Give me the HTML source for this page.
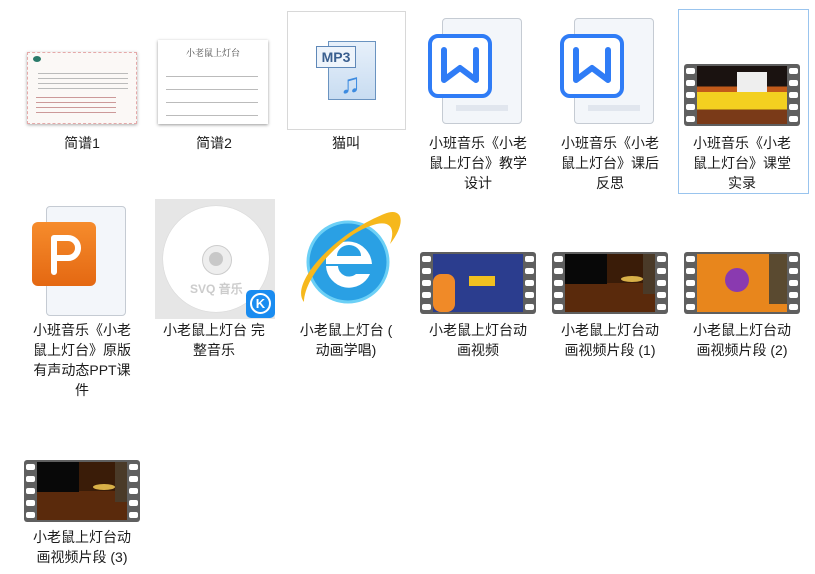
<!DOCTYPE html>
<html><head><meta charset="utf-8"><style>
body{margin:0;width:815px;height:574px;background:#fff;position:relative;overflow:hidden;font-family:"Liberation Sans","Noto Sans CJK SC",sans-serif}
.a{position:absolute}
.t{position:absolute;width:108px;text-align:center;font-size:14px;line-height:20px;color:#1b1b1b}
.film{position:absolute;width:116px;height:62px;background:#5f5f5f;border-radius:3px}
.film .h{position:absolute;width:9px;height:6px;background:#fff;border-radius:2px}
.film .in{position:absolute;left:13px;right:13px;top:2px;bottom:2px;overflow:hidden}
.doc{position:absolute;background:#f3f6fa;border:1.5px solid #c5cbd3;border-radius:4px}
</style></head><body>

<div class="a" style="left:27px;top:52px;width:110px;height:72px;background:#fbf8f6;box-shadow:0 1px 3px #aaa;border:1px dashed #e5a9a9;box-sizing:border-box">
<div class="a" style="left:5px;top:3px;width:8px;height:6px;background:#2a7a6a;border-radius:50%"></div>
<div class="a" style="left:10px;top:16px;width:90px;height:20px;background:repeating-linear-gradient(#fbf8f6 0 4px,#bbb 4px 5px)"></div>
<div class="a" style="left:8px;top:40px;width:80px;height:24px;background:repeating-linear-gradient(#fbf8f6 0 4px,#c99 4px 5px)"></div>
</div>
<div class="t" style="left:28px;top:133px">简谱1</div>

<div class="a" style="left:158px;top:40px;width:110px;height:84px;background:#fff;box-shadow:0 1px 3px #999">
<div class="a" style="left:25px;top:6px;width:60px;font-size:9px;color:#444;text-align:center;font-family:'Noto Serif CJK SC',serif">小老鼠上灯台</div>
<div class="a" style="left:8px;top:26px;width:92px;height:50px;background:repeating-linear-gradient(#fff 0 10px,#bbb 10px 11px,#fff 11px 13px)"></div>
</div>
<div class="t" style="left:160px;top:133px">简谱2</div>

<div class="a" style="left:287px;top:11px;width:119px;height:119px;border:1px solid #d8d8d8;box-sizing:border-box"></div>
<div class="a" style="left:328px;top:41px;width:48px;height:59px;background:linear-gradient(#e7f0fa,#c8dcf1);border:1px solid #6a93c0;box-sizing:border-box"></div>
<div class="a" style="left:316px;top:46px;width:40px;height:22px;background:#eef4fb;border:1px solid #5f88b8;box-sizing:border-box;font:bold 14px 'Liberation Sans',sans-serif;color:#3a5f8f;text-align:center;line-height:20px">MP3</div>
<div class="a" style="left:340px;top:70px;font-size:28px;color:#3d8be0;line-height:28px">♫</div>
<div class="t" style="left:292px;top:133px">猫叫</div>

<div class="doc" style="left:442px;top:18px;width:78px;height:104px"></div>
<div class="a" style="left:456px;top:105px;width:52px;height:6px;background:#e1e6ee"></div>
<svg class="a" style="left:428px;top:34px" width="64" height="64" viewBox="0 0 64 64"><rect x="2" y="2" width="60" height="60" rx="8" fill="#fff" stroke="#2f7cf6" stroke-width="4"/><path d="M16 16 V46 L32 34 L48 46 V16" fill="none" stroke="#2f7cf6" stroke-width="6" stroke-linejoin="round" stroke-linecap="round"/></svg>
<div class="t" style="left:424px;top:133px">小班音乐《小老鼠上灯台》教学设计</div>

<div class="doc" style="left:574px;top:18px;width:78px;height:104px"></div>
<div class="a" style="left:588px;top:105px;width:52px;height:6px;background:#e1e6ee"></div>
<svg class="a" style="left:560px;top:34px" width="64" height="64" viewBox="0 0 64 64"><rect x="2" y="2" width="60" height="60" rx="8" fill="#fff" stroke="#2f7cf6" stroke-width="4"/><path d="M16 16 V46 L32 34 L48 46 V16" fill="none" stroke="#2f7cf6" stroke-width="6" stroke-linejoin="round" stroke-linecap="round"/></svg>
<div class="t" style="left:556px;top:133px">小班音乐《小老鼠上灯台》课后反思</div>

<div class="a" style="left:678px;top:9px;width:131px;height:185px;border:1px solid #99c4ee;box-sizing:border-box"></div>
<div class="film" style="left:684px;top:64px"><div class="in" style="background:linear-gradient(#1a1210 0 35%,#c25a1a 35% 45%,#f3d020 45% 75%,#7a3a18 75%)"><div class="a" style="left:40px;top:6px;width:30px;height:20px;background:#eee"></div></div></div>
<div class="t" style="left:688px;top:133px">小班音乐《小老鼠上灯台》课堂实录</div>

<div class="doc" style="left:46px;top:206px;width:78px;height:108px"></div>
<svg class="a" style="left:32px;top:222px" width="64" height="64" viewBox="0 0 64 64"><defs><linearGradient id="og" x1="0" y1="0" x2="0" y2="1"><stop offset="0" stop-color="#f68c2c"/><stop offset="1" stop-color="#e46812"/></linearGradient></defs><rect width="64" height="64" rx="6" fill="url(#og)"/><path d="M22 50 V16 H36 A10 10 0 0 1 36 36 H22" fill="none" stroke="#fff" stroke-width="6" stroke-linecap="round" stroke-linejoin="round"/></svg>
<div class="t" style="left:28px;top:320px">小班音乐《小老鼠上灯台》原版有声动态PPT课件</div>

<div class="a" style="left:155px;top:199px;width:120px;height:120px;background:#e6e6e6"></div>
<div class="a" style="left:163px;top:206px;width:106px;height:106px;border-radius:50%;background:#fff;box-shadow:0 0 1px #bbb"></div>
<div class="a" style="left:202px;top:245px;width:28px;height:28px;border-radius:50%;background:#eee;border:1px solid #ccc"></div>
<div class="a" style="left:209px;top:252px;width:14px;height:14px;border-radius:50%;background:#c8c8c8"></div>
<div class="a" style="left:190px;top:280px;font:bold 12px 'Liberation Sans',sans-serif;color:#ccc">SVQ 音乐</div>
<div class="a" style="left:246px;top:290px;width:29px;height:28px;background:#1a8cf0;border-radius:5px"></div>
<div class="a" style="left:250px;top:293px;width:21px;height:21px;border-radius:50%;border:2px solid #fff;box-sizing:border-box;color:#fff;font:bold 13px/17px 'Liberation Sans',sans-serif;text-align:center">K</div>
<div class="t" style="left:160px;top:320px">小老鼠上灯台 完整音乐</div>

<svg class="a" style="left:294px;top:204px" width="110" height="110" viewBox="0 0 110 110">
<circle cx="54" cy="58" r="40" fill="#2aa0e4"/>
<circle cx="54" cy="58" r="40" fill="none" stroke="#6cd0f6" stroke-width="3"/>
<path d="M32 60 H78 A24 24 0 0 0 32 52 Z" fill="#fff"/>
<path d="M43 52 A12 11 0 0 1 67 52 Z" fill="#2aa0e4"/>
<path d="M32 62 A23 23 0 0 0 76 70 H62 A11 11 0 0 1 44 62 Z" fill="#fff"/>
<path d="M10 98 C-5 80 40 30 90 10 C110 2 112 20 96 40 C104 18 90 12 60 30 C30 50 10 80 10 98Z" fill="#f6b81c"/>
</svg>
<div class="t" style="left:292px;top:320px">小老鼠上灯台&nbsp;(<br>动画学唱)</div>

<div class="film" style="left:420px;top:252px"><div class="in" style="background:#2b3d8e"><div class="a" style="left:0;top:20px;width:22px;height:38px;background:#f08a28;border-radius:8px"></div><div class="a" style="left:36px;top:22px;width:26px;height:10px;background:#f0c020"></div></div></div>
<div class="t" style="left:424px;top:320px">小老鼠上灯台动画视频</div>

<div class="film" style="left:552px;top:252px"><div class="in" style="background:linear-gradient(#3a1c08 0 50%,#5a2a0c 50%)"><div class="a" style="left:0;top:0;width:42px;height:30px;background:#080808"></div><div class="a" style="left:56px;top:22px;width:22px;height:6px;background:#d8b048;border-radius:50%"></div><div class="a" style="left:78px;top:0;width:14px;height:40px;background:#4a3a28"></div></div></div>
<div class="t" style="left:556px;top:320px">小老鼠上灯台动画视频片段 (1)</div>

<div class="film" style="left:684px;top:252px"><div class="in" style="background:#e8861c"><div class="a" style="left:28px;top:14px;width:24px;height:24px;background:#8a3ab0;border-radius:50%"></div><div class="a" style="left:72px;top:0;width:18px;height:50px;background:#5a4a30"></div></div></div>
<div class="t" style="left:688px;top:320px">小老鼠上灯台动画视频片段 (2)</div>

<div class="film" style="left:24px;top:460px"><div class="in" style="background:linear-gradient(#3a1c08 0 50%,#5a2a0c 50%)"><div class="a" style="left:0;top:0;width:42px;height:30px;background:#080808"></div><div class="a" style="left:56px;top:22px;width:22px;height:6px;background:#d8b048;border-radius:50%"></div><div class="a" style="left:78px;top:0;width:14px;height:40px;background:#4a3a28"></div></div></div>
<div class="t" style="left:28px;top:527px">小老鼠上灯台动画视频片段 (3)</div>

<script>
document.querySelectorAll('.film').forEach(f=>{for(let i=0;i<5;i++){for(const x of [2,105]){const h=document.createElement('div');h.className='h';h.style.left=x+'px';h.style.top=(4+i*12)+'px';f.appendChild(h);}}});
</script>
</body></html>
